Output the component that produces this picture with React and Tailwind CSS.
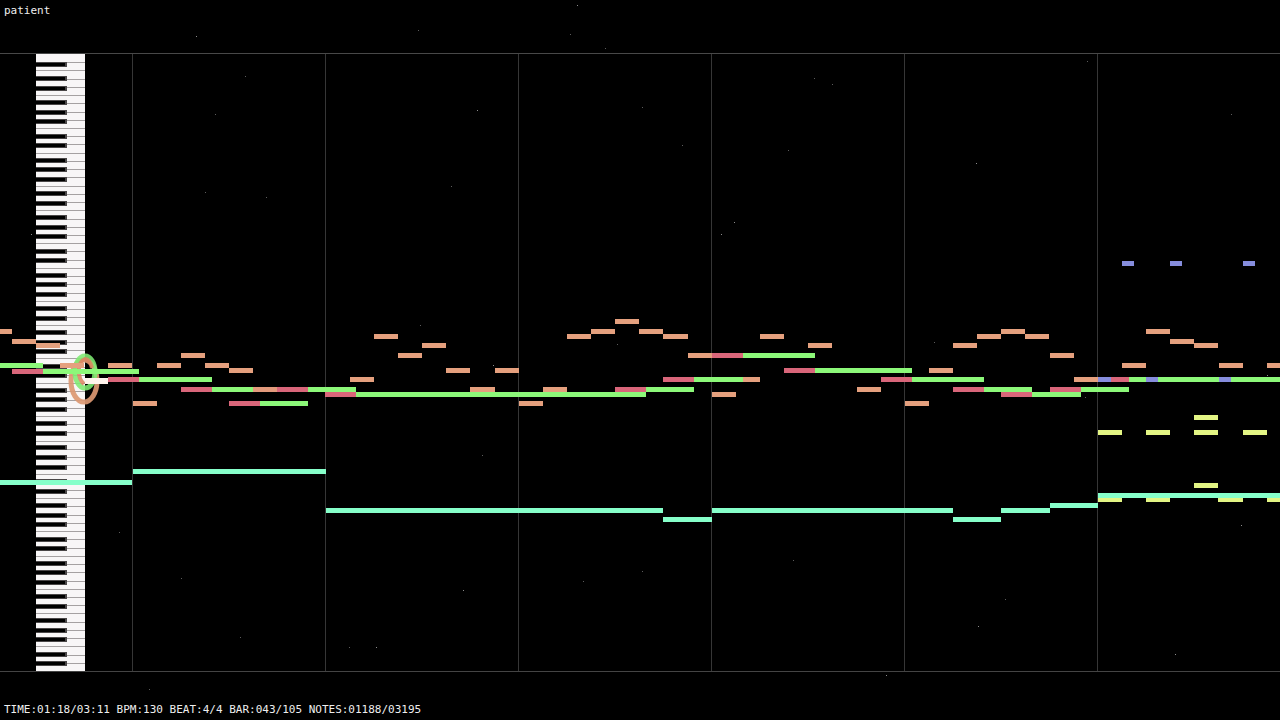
import React from 'react';

const TOP = 54;
const BOTTOM = 671;
const OCTAVE = (BOTTOM - TOP) / 75 * 7;
const BLACK_KEYS = [1, 3, 6, 8, 10];
const BAR_LINES = [132, 325, 518, 711, 904, 1097];

const COLORS = {
  orange: '#e5a07e',
  pink: '#d9667a',
  green: '#8cf879',
  cyan: '#86ffca',
  yellow: '#e3f584',
  blue: '#868ddd',
};

// each note: [start x, end x, y]
const TRACKS = [
  {
    color: COLORS.orange,
    notes: [
      [0, 12, 329], [12, 36, 339], [36, 60, 343], [60, 84, 363], [108, 132, 363],
      [133, 157, 401], [157, 181, 363], [181, 205, 353], [205, 229, 363], [229, 253, 368],
      [350, 374, 377], [374, 398, 334], [398, 422, 353], [422, 446, 343], [446, 470, 368],
      [470, 495, 387], [495, 519, 368], [519, 543, 401], [543, 567, 387], [567, 591, 334],
      [591, 615, 329], [615, 639, 319], [639, 663, 329], [663, 688, 334], [688, 712, 353],
      [712, 736, 392], [743, 760, 377], [760, 784, 334], [808, 832, 343], [857, 881, 387],
      [905, 929, 401], [929, 953, 368], [953, 977, 343], [977, 1001, 334], [1001, 1025, 329],
      [1025, 1049, 334], [1050, 1074, 353], [1074, 1098, 377], [1122, 1146, 363], [1146, 1170, 329],
      [1170, 1194, 339], [1194, 1218, 343], [1219, 1243, 363], [1267, 1280, 363],
    ],
  },
  {
    color: COLORS.green,
    notes: [
      [0, 43, 363], [43, 139, 369], [139, 212, 377], [212, 253, 387], [260, 308, 401],
      [308, 356, 387], [356, 646, 392], [646, 694, 387], [694, 743, 377], [743, 815, 353],
      [815, 912, 368], [912, 984, 377], [984, 1032, 387], [1032, 1081, 392], [1081, 1129, 387],
      [1129, 1280, 377],
    ],
  },
  {
    color: COLORS.pink,
    notes: [
      [12, 43, 369], [108, 139, 377], [181, 212, 387], [229, 260, 401], [277, 308, 387],
      [325, 356, 392], [615, 646, 387], [663, 694, 377], [712, 743, 353], [784, 815, 368],
      [881, 912, 377], [953, 984, 387], [1001, 1032, 392], [1050, 1081, 387], [1111, 1129, 377],
    ],
  },
  { color: '#e39a7c', notes: [[253, 277, 387]] },
  {
    color: COLORS.blue,
    notes: [
      [1122, 1134, 261], [1170, 1182, 261], [1243, 1255, 261],
      [1098, 1111, 377], [1146, 1158, 377], [1219, 1231, 377],
    ],
  },
  {
    color: COLORS.yellow,
    notes: [
      [1098, 1122, 430], [1146, 1170, 430], [1194, 1218, 430], [1243, 1267, 430],
      [1194, 1218, 415], [1194, 1218, 483],
      [1098, 1122, 497], [1146, 1170, 497], [1218, 1243, 497], [1267, 1280, 497],
    ],
  },
  {
    color: COLORS.cyan,
    notes: [
      [0, 132, 480], [133, 326, 469], [326, 663, 508], [663, 712, 517], [712, 953, 508],
      [953, 1001, 517], [1001, 1050, 508], [1050, 1098, 503], [1098, 1280, 493],
    ],
  },
];

const STARS = [
  [577, 5], [418, 30], [570, 34], [196, 36], [605, 48], [245, 76], [477, 110], [642, 107],
  [215, 114], [976, 163], [266, 197], [205, 192], [31, 234], [788, 150], [682, 145], [721, 234],
  [482, 455], [583, 581], [463, 590], [181, 578], [349, 647], [376, 647], [149, 689], [240, 637],
  [886, 675], [1087, 61], [1231, 114], [1175, 654], [793, 560], [642, 571], [1267, 375], [420, 325],
  [617, 344], [493, 365], [832, 84], [814, 78], [734, 222], [934, 342], [1085, 397], [1241, 525],
  [119, 532], [451, 186], [978, 626], [1005, 599],
];

function Stars() {
  return (
    <svg viewBox="0 0 1280 720" className="absolute inset-x-0 top-0 w-full pointer-events-none" aria-hidden="true">
      {STARS.map(([x, y], i) => (
        <rect key={i} x={x} y={y} width="1" height="1" fill={i % 3 === 0 ? '#8c8c8c' : '#5c5c5c'} />
      ))}
    </svg>
  );
}

function Keyboard() {
  const whiteLines = [];
  for (let i = 1; i < 75; i++) {
    whiteLines.push(Math.round(BOTTOM - i * (OCTAVE / 7)));
  }
  const blackKeys = [];
  for (let n = 0; n < 128; n++) {
    if (BLACK_KEYS.includes(n % 12)) {
      blackKeys.push(Math.round(BOTTOM - (n + 1) * (OCTAVE / 12)));
    }
  }

  return (
    <g>
      <rect x="36" y={TOP} width="49" height={BOTTOM - TOP} fill="#f8f6f7" />
      {whiteLines.map(y => (
        <rect key={y} x="36" y={y} width="49" height="1" fill="#a5a1a2" />
      ))}
      {blackKeys.map(y => (
        <g key={y}>
          <rect x="36" y={y} width="31" height="5" fill="#4a4748" />
          <rect x="36" y={y + 1} width="29" height="3" fill="#000000" />
        </g>
      ))}
    </g>
  );
}

function PianoRoll() {
  return (
    <svg viewBox="0 53 1280 619" className="block w-full" role="img" aria-label="Piano roll">
      {BAR_LINES.map(x => (
        <rect key={x} x={x} y={TOP} width="1" height={BOTTOM - TOP} fill="#363636" />
      ))}
      <Keyboard />
      <rect x="0" y={TOP - 1} width="1280" height="1" fill="#484848" />
      <rect x="0" y={BOTTOM} width="1280" height="1" fill="#444444" />
      {/* hit rings */}
      <ellipse cx="84" cy="381" rx="13" ry="21" fill="none" stroke="#dc9872" strokeWidth="5" opacity="0.92" />
      <ellipse cx="85" cy="372" rx="10" ry="16" fill="none" stroke="#7eea72" strokeWidth="5" opacity="0.88" />
      <path d="M84 384 C77 378 77 362 85 359 Q90 359 92 368" fill="none" stroke="#dc8460" strokeWidth="4" opacity="0.85" />
      {TRACKS.map(track => track.notes.map(([start, end, y]) => (
        <rect key={`${start}-${y}`} x={start} y={y} width={end - start} height="5" fill={track.color} />
      )))}
      <rect x="85" y="378" width="23" height="6" fill="#fff4ec" />
    </svg>
  );
}

export default function App() {
  return (
    <div className="relative min-h-screen flex flex-col overflow-hidden bg-black text-[#eeeeee] text-[11px] leading-4 font-['DejaVu_Sans_Mono',monospace]">
      <Stars />
      <header className="h-[53px] px-1 pt-[3px]">
        <h1>patient</h1>
      </header>
      <main>
        <PianoRoll />
      </main>
      <footer className="mt-auto px-1 pb-[2px]">
        <p className="whitespace-nowrap">TIME:01:18/03:11 BPM:130 BEAT:4/4 BAR:043/105 NOTES:01188/03195</p>
      </footer>
    </div>
  );
}
